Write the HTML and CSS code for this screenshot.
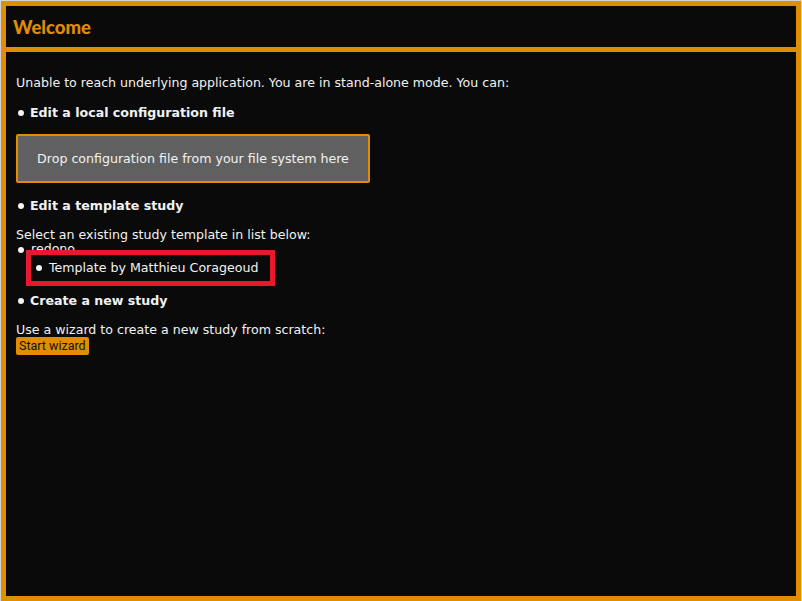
FILE: index.html
```html
<!DOCTYPE html>
<html>
<head>
<meta charset="utf-8">
<link rel="stylesheet" href="styles.css">
</head>
<body>
<div class="frame">
  <header class="header"><h1 class="title">Welcome</h1></header>
  <main class="content">
    <p class="intro">Unable to reach underlying application. You are in stand-alone mode. You can:</p>
    <h2 class="section">Edit a local configuration file</h2>
    <div class="dropzone">Drop configuration file from your file system here</div>
    <h2 class="section">Edit a template study</h2>
    <p class="line">Select an existing study template in list below:</p>
    <ul class="templates">
      <li class="tpl">redono
        <ul class="sub">
          <li class="tpl highlighted">Template by Matthieu Corageoud</li>
        </ul>
      </li>
    </ul>
    <h2 class="section">Create a new study</h2>
    <p class="line">Use a wizard to create a new study from scratch:</p>
    <button class="wizard">Start wizard</button>
  </main>
</div>
</body>
</html>
```
FILE: styles.css
```css
html, body {
  margin: 0;
  padding: 0;
}
body {
  background: #d4d4d4;
  padding: 1px 1px 0 1px;
  font-family: "DejaVu Sans", Verdana, sans-serif;
  font-size: 12.6px;
  color: #f2f2f2;
  overflow: hidden;
}
.frame {
  box-sizing: border-box;
  height: 600px;
  border: 5px solid #e08e00;
  background: #0a0a0a;
  display: flex;
  flex-direction: column;
}
.header {
  height: 41px;
  border-bottom: 5px solid #e08e00;
  display: flex;
  align-items: center;
  padding-left: 7px;
}
.title {
  margin: 0;
  font-family: "Lato", "Open Sans", sans-serif;
  font-weight: 900;
  font-size: 18.5px;
  color: #e08e00;
}
.content {
  padding: 23px 10px 0 10px;
}
.intro, .line {
  margin: 0;
  line-height: 15px;
}
.intro { margin-bottom: 15px; }
.section {
  margin: 0;
  font-size: 12.6px;
  font-weight: bold;
  line-height: 16px;
  display: flex;
  align-items: center;
  gap: 6px;
  padding-left: 2px;
}
.section::before, .tpl::before {
  content: "";
  width: 6px;
  height: 6px;
  border-radius: 50%;
  background: #f2f2f2;
  flex: none;
}
.dropzone {
  box-sizing: border-box;
  width: 354px;
  height: 49px;
  margin: 13px 0 15px;
  border: 2px solid #e08e00;
  border-radius: 2px;
  background: #606060;
  display: flex;
  align-items: center;
  justify-content: center;
  color: #f2f2f2;
}
.section + .line { margin-top: 13px; }
.templates, .sub {
  list-style: none;
  margin: 0;
  padding: 0;
}
.templates {
  margin-bottom: 7px;
}
.templates > .tpl {
  display: flex;
  flex-direction: column;
  line-height: 14px;
  position: relative;
  padding-left: 15px;
}
.templates > .tpl::before {
  position: absolute;
  left: 2px;
  top: 5px;
}
.sub {
  margin-left: -5px;
  margin-top: -6px;
  position: relative;
}
.highlighted {
  box-sizing: border-box;
  width: 249px;
  height: 36px;
  border: 5px solid #e8192c;
  background: #0a0a0a;
  display: flex;
  align-items: center;
  gap: 7px;
  padding-left: 5px;
}
.wizard {
  display: block;
  margin-top: 0;
  border: none;
  border-radius: 2px;
  background: #e08e00;
  color: #111;
  font-family: "Roboto", "Liberation Sans", sans-serif;
  font-size: 12.5px;
  height: 18px;
  padding: 0 3px;
  line-height: 18px;
}
```
